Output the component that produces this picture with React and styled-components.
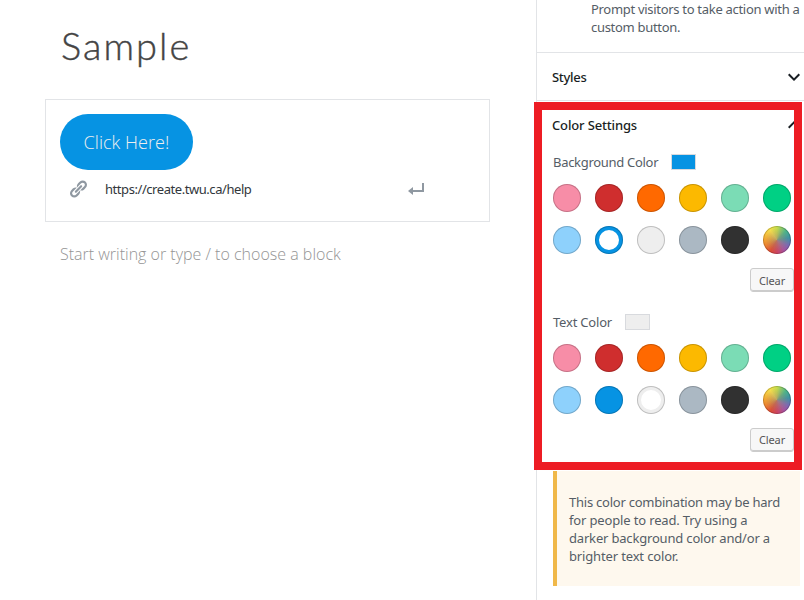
import React from "react";
import styled, { createGlobalStyle } from "styled-components";

const GlobalStyle = createGlobalStyle`
  * { box-sizing: border-box; }
  body { margin: 0; background: #fff; overflow: hidden; font-family: "Noto Sans", "Open Sans", sans-serif; font-size: 13px; }
  p, h1, h2 { margin: 0; font-weight: 400; }
`;

const Page = styled.div`
  display: grid;
  grid-template-columns: 536px 268px;
  width: 804px;
  height: 600px;
  overflow: hidden;
  position: relative;
`;

const Editor = styled.main`
  padding: 18px 46px 0 45px;
`;

const Title = styled.h1`
  height: 60px;
  padding-left: 16px;
  font: 300 38px/55px Lato, sans-serif;
  letter-spacing: 2px;
  color: #444;
  -webkit-text-stroke: 0.4px #444;
  white-space: nowrap;
`;

const Block = styled.section`
  height: 123px;
  margin-top: 21px;
  padding: 14px;
  border: 1px solid #e2e4e7;
`;

const CallToAction = styled.button`
  display: flex;
  align-items: center;
  justify-content: center;
  width: 133px;
  height: 56px;
  padding: 0;
  border: 0;
  border-radius: 28px;
  background: #0693e3;
  color: #eee;
  font: 300 18px/26px "Open Sans", sans-serif;
  letter-spacing: 0.05px;
  white-space: nowrap;
`;

const LinkRow = styled.div`
  display: flex;
  align-items: center;
  height: 38px;
  padding-left: 8px;
  color: #32373c;

  svg { fill: #8f98a1; flex: none; }
`;

const Url = styled.span`
  width: 301px;
  margin-left: 17px;
  font-size: 13px;
  letter-spacing: -0.44px;
  white-space: nowrap;
`;

const Prompt = styled.p`
  margin: 19px 0 0 15px;
  font: 300 16px/26px "Open Sans", sans-serif;
  color: #949494;
  white-space: nowrap;
`;

const Sidebar = styled.aside`
  border-left: 1px solid #e2e4e7;
  color: #555d66;
`;

const Description = styled.p`
  height: 53px;
  padding-left: 54px;
  border-bottom: 1px solid #e2e4e7;
  line-height: 18px;
  letter-spacing: -0.3px;
  white-space: nowrap;
`;

const PanelHeader = styled.h2`
  display: flex;
  align-items: center;
  justify-content: space-between;
  height: 48px;
  padding: 0 0 0 15px;
  border-bottom: ${(p) => (p.$divided ? "1px solid #e2e4e7" : "0")};
  color: #191e23;
  font-size: 13px;
  font-weight: 500;
  letter-spacing: ${(p) => p.$spacing}px;

  svg { flex: none; margin-right: -2px; }
`;

const ColorControl = styled.section`
  height: 160px;
  padding-left: 16px;
`;

const Legend = styled.div`
  display: flex;
  align-items: center;
  height: 26px;
  gap: 13px;
  white-space: nowrap;
`;

const LegendText = styled.span`
  width: ${(p) => p.$width}px;
  letter-spacing: ${(p) => p.$spacing}px;
`;

const Indicator = styled.span`
  width: 25px;
  height: 16px;
  border: 1px solid #d8dade;
  background: ${(p) => p.$color};
`;

const Palette = styled.div`
  display: grid;
  grid-template-columns: repeat(6, 28px);
  gap: 14px;
  margin-top: 9px;
`;

const Swatch = styled.button`
  width: 28px;
  height: 28px;
  padding: 0;
  border: 0;
  border-radius: 50%;
  background: ${(p) => (p.$active ? "#fff" : p.$color)};
  box-shadow: inset 0 0 0 1px rgba(0, 0, 0, 0.2)${(p) => (p.$active ? `, inset 0 0 0 4px ${p.$color}` : "")};
`;

const ClearRow = styled.div`
  display: flex;
  justify-content: flex-end;
  width: 241px;
  margin-top: 14px;
`;

const ClearButton = styled.button`
  width: 44px;
  height: 24px;
  padding: ${(p) => (p.$lowered ? 2 : 0)}px 0 0;
  border: 1px solid #ccc;
  border-radius: 3px;
  background: #f7f7f7;
  box-shadow: inset 0 -1px 0 #ccc;
  color: #555;
  font: 11px/20px "Noto Sans", sans-serif;
  letter-spacing: -0.1px;
`;

const Notice = styled.p`
  width: 247px;
  height: 115px;
  margin: 2px 0 0 16px;
  padding: 22px 0 0 12px;
  border-left: 4px solid #f0b849;
  background: #fef8ee;
  line-height: 18px;
  white-space: nowrap;
`;

const NoticeLine = styled.span`
  display: block;
  letter-spacing: ${(p) => p.$spacing}px;
`;

const Highlight = styled.div`
  position: absolute;
  left: 534px;
  top: 102px;
  width: 268px;
  height: 368px;
  border: 8px solid #ed1c24;
  pointer-events: none;
`;

const spectrum =
  "radial-gradient(circle, rgba(165,140,110,.7), rgba(165,140,110,0) 62%), conic-gradient(#c5dc4c, #4bb58a 45deg, #3b93a5 80deg, #7a68b4 115deg, #a552a0 145deg, #cc4260 180deg, #dd4b36 210deg, #ee8a2e 250deg, #f6b436 285deg, #f7e04a 325deg, #c5dc4c)";

const colors = ["#f78da7", "#cf2e2e", "#ff6900", "#fcb900", "#7bdcb5", "#00d084", "#8ed1fc", "#0693e3", "#eee", "#abb8c3", "#313131", spectrum];

function Chevron({ up }) {
  return (
    <svg width="24" height="24" viewBox="0 0 24 24" fill="#191e23">
      <path d={up ? "M12 8l-6 6 1.41 1.41L12 10.83l4.59 4.58L18 14z" : "M7.41 8.59L12 13.17l4.59-4.58L18 10l-6 6-6-6z"} />
    </svg>
  );
}

function ColorPicker({ label, width, spacing, selected, lowered }) {
  return (
    <ColorControl>
      <Legend>
        <LegendText $width={width} $spacing={spacing}>{label}</LegendText>
        <Indicator $color={selected} />
      </Legend>
      <Palette>
        {colors.map((color) => (
          <Swatch key={color} $color={color} $active={color === selected} />
        ))}
      </Palette>
      <ClearRow>
        <ClearButton $lowered={lowered}>Clear</ClearButton>
      </ClearRow>
    </ColorControl>
  );
}

export default function App() {
  return (
    <Page>
      <GlobalStyle />
      <Editor>
        <Title>Sample</Title>
        <Block>
          <CallToAction>Click Here!</CallToAction>
          <LinkRow>
            <svg width="20" height="20" viewBox="0 0 20 20">
              <path d="M17.74 2.76c1.68 1.69 1.68 4.41 0 6.1l-1.53 1.52c-1.12 1.12-2.7 1.47-4.14 1.09l2.62-2.61.76-.77.76-.76c.84-.84.84-2.2 0-3.04-.84-.85-2.2-.85-3.04 0l-.77.76-3.38 3.38c-.37-1.44-.02-3.02 1.1-4.14l1.52-1.53c1.69-1.68 4.42-1.68 6.1 0zM8.59 13.43l5.34-5.34c.42-.42.42-1.1 0-1.52-.44-.43-1.13-.39-1.53 0l-5.33 5.34c-.42.42-.42 1.1 0 1.52.44.43 1.13.39 1.52 0zm-.76 2.29l4.14-4.15c.38 1.44.03 3.02-1.09 4.14l-1.52 1.53c-1.69 1.68-4.41 1.68-6.1 0-1.68-1.68-1.68-4.42 0-6.1l1.53-1.52c1.12-1.12 2.7-1.47 4.14-1.1l-4.14 4.15c-.85.84-.85 2.2 0 3.05.84.84 2.2.84 3.04 0z" />
            </svg>
            <Url>https://create.twu.ca/help</Url>
            <svg width="20" height="20" viewBox="0 0 20 20">
              <path d="M16 4h2v9H7v3l-5-4 5-4v3h9V4z" />
            </svg>
          </LinkRow>
        </Block>
        <Prompt>Start writing or type / to choose a block</Prompt>
      </Editor>
      <Sidebar>
        <Description>
          Prompt visitors to take action with a<br />custom button.
        </Description>
        <PanelHeader $divided $spacing={-0.3}>
          Styles
          <Chevron />
        </PanelHeader>
        <PanelHeader $spacing={-0.15}>
          Color Settings
          <Chevron up />
        </PanelHeader>
        <ColorPicker label="Background Color" width={105} spacing={-0.3} selected="#0693e3" lowered />
        <ColorPicker label="Text Color" width={59} spacing={-0.2} selected="#eee" />
        <Notice>
          <NoticeLine $spacing={-0.24}>This color combination may be hard</NoticeLine>
          <NoticeLine $spacing={-0.15}>for people to read. Try using a</NoticeLine>
          <NoticeLine $spacing={-0.18}>darker background color and/or a</NoticeLine>
          <NoticeLine $spacing={-0.15}>brighter text color.</NoticeLine>
        </Notice>
      </Sidebar>
      <Highlight />
    </Page>
  );
}
